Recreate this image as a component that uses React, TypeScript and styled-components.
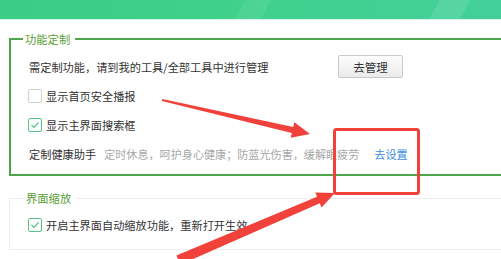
import React from "react";
import styled, { createGlobalStyle } from "styled-components";

const Global = createGlobalStyle`
  html, body { margin: 0; padding: 0; background: #fff; }
  body {
    width: 501px; height: 259px; overflow: hidden;
    font-family: "Noto Sans CJK SC", "Noto Sans", sans-serif;
    font-size: 11px; color: #333;
  }
`;

const Page = styled.div`
  position: relative;
  width: 501px;
  height: 259px;
  overflow: hidden;
`;

const Header = styled.div`
  height: 19px;
  background:
    linear-gradient(118deg, transparent 0 48%, rgba(255,255,255,0.07) 48% 53%, transparent 53% 100%),
    linear-gradient(118deg, transparent 0 86%, rgba(255,255,255,0.1) 86% 92%, transparent 92% 100%),
    linear-gradient(90deg, #3acd85 0%, #40d18d 50%, #44d09a 100%);
  border-bottom: 1px solid #d8f3e6;
`;

const Group = styled.div<{ $accent?: boolean }>`
  position: relative;
  margin: ${(p) => (p.$accent ? "18px 0 0 9px" : "22px 0 0 9px")};
  width: 560px;
  border: ${(p) => (p.$accent ? "2px solid #4ea64a" : "1px solid #ececec")};
  padding: ${(p) => (p.$accent ? "12px 0 6px 18px" : "13px 0 11px 19px")};
  display: flex;
  flex-direction: column;
`;

const Legend = styled.div<{ $left: number }>`
  position: absolute;
  top: -9px;
  left: ${(p) => p.$left}px;
  padding: 0 5px 0 2px;
  background: #fff;
  color: #5a9e34;
  font-size: 11.3px;
  line-height: 16px;
`;

const Row = styled.div<{ $h?: number }>`
  height: ${(p) => p.$h ?? 29}px;
  display: flex;
  align-items: center;
`;

const ManageRow = styled.div`
  height: 29px;
  display: grid;
  grid-template-columns: 309px auto;
  align-items: center;
`;

const Text = styled.span`
  font-size: 11.2px;
  color: #333;
  white-space: nowrap;
`;

const Hint = styled.span`
  margin-left: 8px;
  font-size: 11.1px;
  color: #a8a8a8;
  white-space: nowrap;
`;

const Link = styled.span`
  margin-left: 15px;
  font-size: 11.1px;
  color: #3b8fe0;
  white-space: nowrap;
`;

const Button = styled.button`
  width: 65px;
  height: 23px;
  border: 1px solid #c9c9c9;
  border-radius: 2px;
  background: linear-gradient(#fdfdfd, #ebebeb);
  font-family: inherit;
  font-size: 11.5px;
  color: #333;
  padding: 0;
  cursor: pointer;
`;

const Box = styled.span<{ $checked?: boolean }>`
  box-sizing: border-box;
  width: 14px;
  height: 14px;
  margin-left: -1px;
  margin-right: 4px;
  border: 1px solid ${(p) => (p.$checked ? "#55c488" : "#cfcfcf")};
  border-radius: 2px;
  display: inline-flex;
  align-items: center;
  justify-content: center;
  background: #fff;
`;

const Overlay = styled.svg`
  position: absolute;
  left: 0;
  top: 0;
  pointer-events: none;
`;

function Check({ checked }: { checked?: boolean }) {
  return (
    <Box $checked={checked}>
      {checked && (
        <svg width="10" height="10" viewBox="0 0 10 10">
          <polyline points="1.5,5 4,7.5 8.5,2.5" fill="none" stroke="#55c488" strokeWidth="1.2" />
        </svg>
      )}
    </Box>
  );
}

export default function App() {
  return (
    <Page>
      <Global />
      <Header />
      <Group $accent>
        <Legend $left={12}>功能定制</Legend>
        <ManageRow>
          <Text>需定制功能，请到我的工具/全部工具中进行管理</Text>
          <Button>去管理</Button>
        </ManageRow>
        <Row>
          <Check />
          <Text>显示首页安全播报</Text>
        </Row>
        <Row>
          <Check checked />
          <Text>显示主界面搜索框</Text>
        </Row>
        <Row>
          <Text>定制健康助手</Text>
          <Hint>定时休息，呵护身心健康；防蓝光伤害，缓解眼疲劳</Hint>
          <Link>去设置</Link>
        </Row>
      </Group>
      <Group>
        <Legend $left={14}>界面缩放</Legend>
        <Row $h={26}>
          <Check checked />
          <Text>开启主界面自动缩放功能，重新打开生效</Text>
        </Row>
      </Group>
      <Overlay width="501" height="259" viewBox="0 0 501 259">
        <rect x="334.5" y="129.5" width="84" height="64" rx="2" fill="none" stroke="#f0413a" strokeWidth="3" />
        <polygon
          points="162.2,99 293.2,127.1 294.3,122.2 310,134 290.7,137.8 291.8,132.9 161.8,101"
          fill="#f0413a"
        />
        <polygon
          points="176.4,255.4 317,196.8 315.3,192.6 335,193 321.5,207.4 319.8,203.2 180.4,264.6"
          fill="#f0413a"
        />
      </Overlay>
    </Page>
  );
}
